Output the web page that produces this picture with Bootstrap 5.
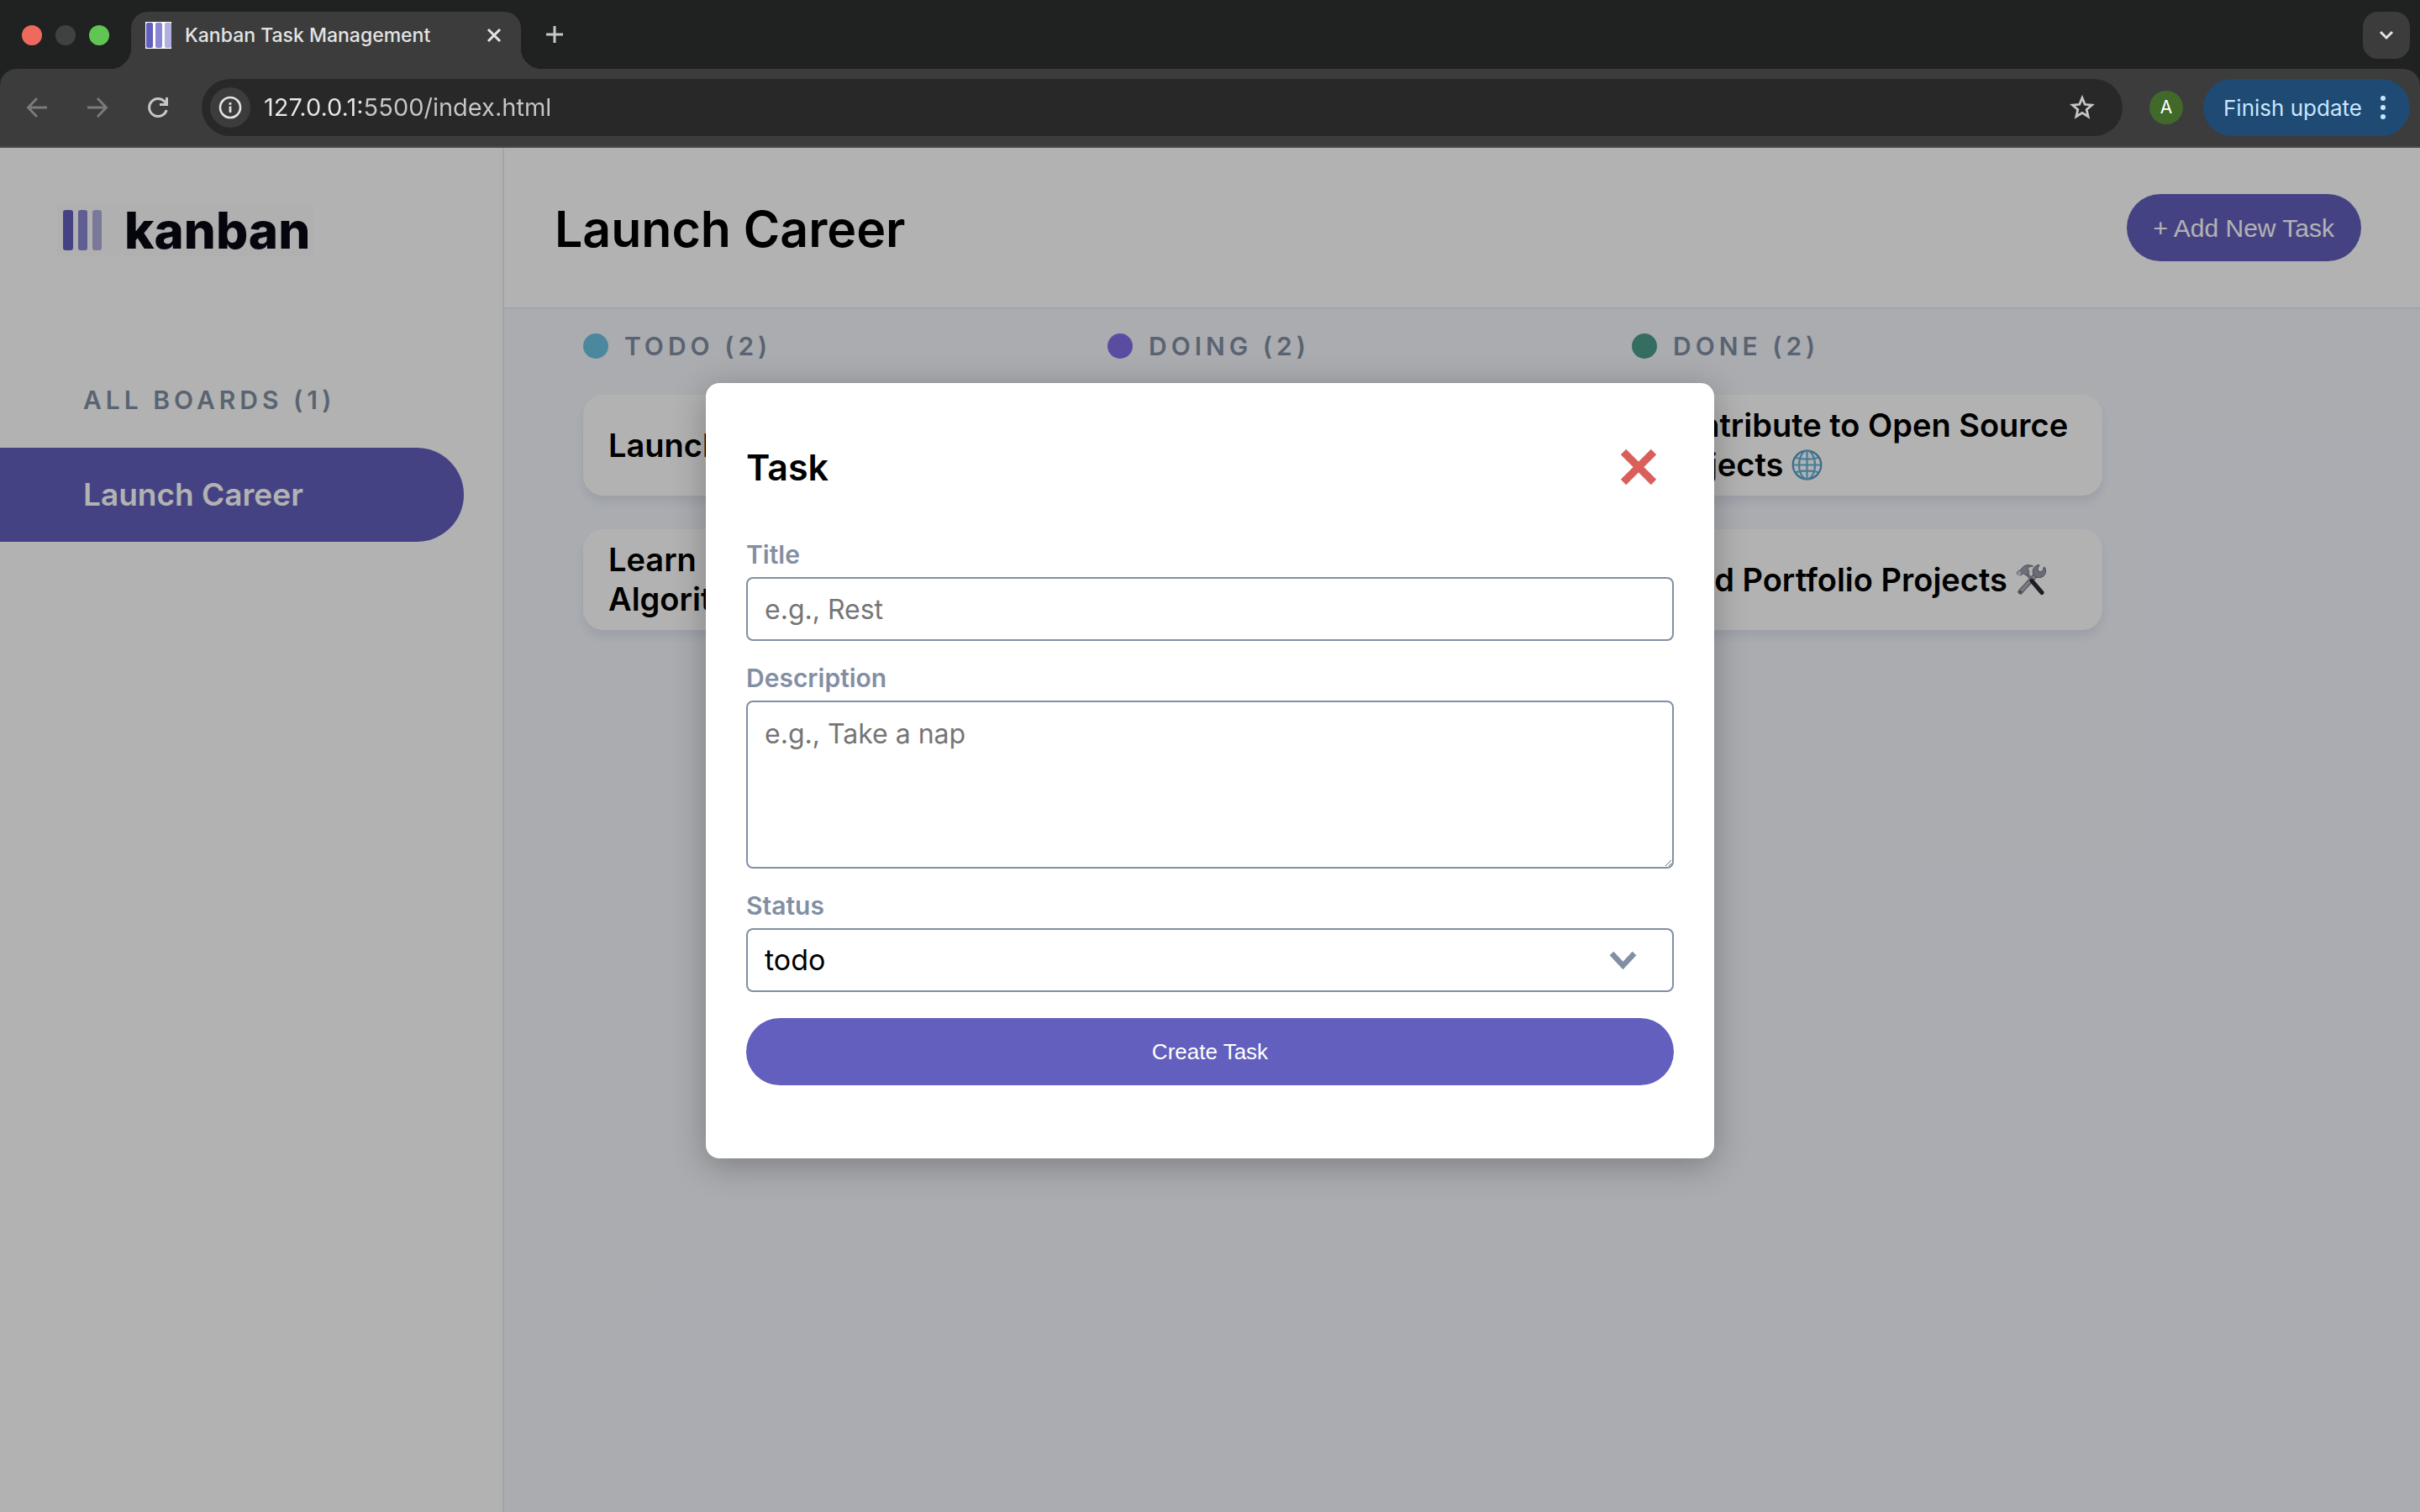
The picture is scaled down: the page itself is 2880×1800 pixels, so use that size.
<!DOCTYPE html>
<html lang="en">
<head>
<meta charset="utf-8">
<meta name="viewport" content="width=device-width, initial-scale=1">
<title>Kanban Task Management</title>
<link href="https://cdn.jsdelivr.net/npm/bootstrap@5.3.0/dist/css/bootstrap.min.css" rel="stylesheet">
<style>
  :root {
    --purple: #635fbe;
    --slate: #828fa3;
    --line: #e4ebfa;
    --chrome: #3c3c3c;
  }
  body { font-family: Inter, "Noto Sans", sans-serif; color: #000; background: #202221; }
  svg { display: block; flex: none; }
  button, input, textarea, select { font-family: inherit; }

  /* Browser window */
  .tab-strip { padding: 14px 12px 0 26px; background: #202221; }
  .light { width: 24px; height: 24px; border-radius: 50%; }
  .light-close { background: #ee6a5f; }
  .light-min { background: #404241; }
  .light-max { background: #61c554; }
  .win-tab {
    position: relative; width: 464px; height: 68px; margin-left: 26px; padding: 0 20px 12px 17px;
    background: var(--chrome); border-radius: 20px 20px 0 0; color: #e3e3e3;
    font-size: 23px; font-weight: 500; line-height: 32px;
  }
  .win-tab::before, .win-tab::after { content: ""; position: absolute; bottom: 0; width: 24px; height: 24px; }
  .win-tab::before { right: 100%; background: radial-gradient(circle at 0 0, transparent 24px, var(--chrome) 24px); }
  .win-tab::after { left: 100%; background: radial-gradient(circle at 100% 0, transparent 24px, var(--chrome) 24px); }
  .bare { padding: 0; border: 0; background: none; color: inherit; }
  .new-tab { margin: 16px 0 0 29px; }
  .tab-menu { width: 56px; height: 56px; border: 0; border-radius: 18px; background: var(--chrome); }
  .toolbar { padding: 12px 12px 12px 28px; background: var(--chrome); border-bottom: 2px solid #4a4a4a; border-radius: 20px 20px 0 0; color: #c7c7c7; }
  .nav-icons { gap: 40px; margin-right: 36px; }
  .dim { color: #7b7b7b; }
  .address { height: 68px; padding: 0 32px 0 10px; border-radius: 34px; background: #282828; }
  .site-info { width: 48px; height: 48px; border-radius: 50%; background: var(--chrome); color: #e3e3e3; }
  .address input {
    border: 0; outline: 0; padding: 0; margin-left: 16px; font-size: 29px; line-height: 40px; color: transparent;
    background: linear-gradient(90deg, #e8e8e8 120px, #c7c7c7 120px); -webkit-background-clip: text; background-clip: text;
  }
  .avatar { width: 40px; height: 40px; margin: 0 24px 0 32px; border: 0; border-radius: 50%; background: #41692a; color: #fff; font-size: 21px; line-height: 40px; padding: 0; }
  .update { width: 246px; height: 68px; padding: 0 26px 0 24px; border: 0; border-radius: 34px; background: #1f4a73; color: #c8e5ff; font-size: 26px; }

  /* Page */
  .sidebar { width: 600px; padding: 66px 46px 48px 0; background: #fff; border-right: 2px solid var(--line); }
  .brand { gap: 26px; margin-left: 68px; padding: 8px 4px 8px 7px; background: #fdfdfd; color: #080814; font-size: 60px; font-weight: 800; line-height: 48px; }
  .tracked { color: var(--slate); font-size: 30px; font-weight: 600; letter-spacing: 5px; line-height: 40px; }
  .boards-title { margin: 150px 0 37px; padding-left: 99px; }
  .board-link { padding: 36px 99px; border-radius: 0 56px 56px 0; background: var(--purple); color: #fff; font-size: 37px; font-weight: 600; line-height: 40px; }
  .board-link:hover { color: #fff; }
  .topbar { height: 192px; padding: 0 70px 0 60px; background: #fff; border-bottom: 2px solid var(--line); }
  .topbar h1 { padding-top: 4px; font-size: 59px; font-weight: 600; line-height: 64px; }
  .pill { height: 80px; border: 0; border-radius: 40px; background: var(--purple); color: #fff; font-family: "Liberation Sans", Arial, sans-serif; }
  .add-btn { padding: 0 32px; font-size: 30px; }
  .board { gap: 64px; padding: 24px 94px; background: #f4f7fd; }
  .lane { width: 560px; }
  .lane-head { gap: 19px; margin-bottom: 38px; }
  .dot { width: 30px; height: 30px; border-radius: 50%; }
  .dot-todo { background: #6cc3e2; }
  .dot-doing { background: #816fe7; }
  .dot-done { background: #4d9c8e; }
  .lane-cards { gap: 40px; }
  .task { min-height: 120px; padding: 0 30px; border-radius: 24px; background: #fff; box-shadow: 0 8px 12px rgba(54, 78, 126, .1); font-size: 38px; font-weight: 600; line-height: 47px; }
  .emoji { display: inline-block; vertical-align: -5px; }

  /* Dialog */
  .backdrop { position: absolute; inset: 0; padding-top: 280px; background: rgba(0, 0, 0, .3); }
  .dialog { width: 1200px; padding: 48px 48px 87px; border-radius: 16px; background: #fff; box-shadow: 0 8px 40px rgba(0, 0, 0, .28); }
  .dialog-head { height: 104px; margin-bottom: 32px; padding-right: 20px; }
  .dialog-head h2 { font-size: 43px; font-weight: 600; line-height: 48px; }
  .fields { gap: 24px; }
  .fields label { margin-bottom: 7px; color: var(--slate); font-size: 30px; font-weight: 600; line-height: 40px; }
  .field { height: 76px; padding: 16px 20px; border: 2px solid var(--slate); border-radius: 8px; background-color: #fff; color: #000; font-size: 32px; line-height: 40px; }
  .field::placeholder { color: #757575; }
  textarea.field { height: 200px; padding-top: 18px; }
  select.field {
    font-size: 34px;
    background-image: url("data:image/svg+xml,%3Csvg xmlns='http://www.w3.org/2000/svg' viewBox='0 0 32 22'%3E%3Cpath d='M2.5 3 16 17.500 29.500 3' fill='none' stroke='%23828fa3' stroke-width='6.500'/%3E%3C/svg%3E");
    background-position: right 42px center; background-size: 33px 22px;
  }
  .create-btn { margin-top: 7px; font-size: 26px; }
</style>
</head>
<body class="d-flex flex-column min-vh-100">

<header>
  <div class="tab-strip d-flex align-items-start">
    <div class="d-flex gap-3 mt-3">
      <span class="light light-close"></span><span class="light light-min"></span><span class="light light-max"></span>
    </div>
    <div class="win-tab d-flex align-items-center">
      <svg width="31" height="32" viewBox="0 0 31 32"><path fill="#fff" d="M0 0h31v32H0z"/><rect x="1" y="1" width="8" height="30" rx="2" fill="#635fbe"/><rect x="12" y="1" width="8" height="30" rx="2" fill="#8a86d2"/><rect x="23" y="1" width="8" height="30" rx="2" fill="#b1aee0"/></svg>
      <span class="ms-3">Kanban Task Management</span>
      <button class="bare ms-auto" aria-label="Close tab"><svg width="24" height="24" viewBox="0 0 24 24"><path d="m5 5 14 14M19 5 5 19" stroke="currentColor" stroke-width="3"/></svg></button>
    </div>
    <button class="bare new-tab" aria-label="New tab"><svg width="22" height="22" viewBox="0 0 22 22"><path d="M11 1v20M1 11h20" stroke="#c7c7c7" stroke-width="3"/></svg></button>
    <button class="tab-menu ms-auto d-flex align-items-center justify-content-center" aria-label="Search tabs"><svg width="18" height="12" viewBox="0 0 18 12"><path d="m2 2 7 7 7-7" fill="none" stroke="#e3e3e3" stroke-width="3"/></svg></button>
  </div>
  <div class="toolbar d-flex align-items-center">
    <nav class="nav-icons d-flex">
      <button class="bare dim" aria-label="Back"><svg width="32" height="32" viewBox="0 0 32 32"><path d="M28 16H6M16 5 5.500 16 16 27" fill="none" stroke="currentColor" stroke-width="2.800"/></svg></button>
      <button class="bare dim" aria-label="Forward"><svg width="32" height="32" viewBox="0 0 32 32"><path d="M4 16h22M16 5l10.500 11L16 27" fill="none" stroke="currentColor" stroke-width="2.800"/></svg></button>
      <button class="bare" aria-label="Reload"><svg width="32" height="32" viewBox="0 0 32 32"><path d="M26.200 19A10.500 10.500 0 1 1 24 9l2.500 2.800" fill="none" stroke="currentColor" stroke-width="3"/><path d="M28 4v10H18v-3h7V4z" fill="currentColor"/></svg></button>
    </nav>
    <div class="address d-flex align-items-center flex-grow-1">
      <button class="bare site-info d-flex align-items-center justify-content-center" aria-label="Site information"><svg width="28" height="28" viewBox="0 0 28 28"><circle cx="14" cy="14" r="12" fill="none" stroke="currentColor" stroke-width="2.600"/><path d="M12.600 12.500h2.800V20h-2.800zM12.600 8h2.800v2.800h-2.800z" fill="currentColor"/></svg></button>
      <input class="flex-grow-1" type="text" aria-label="Address" value="127.0.0.1:5500/index.html">
      <button class="bare" aria-label="Bookmark"><svg width="32" height="32" viewBox="0 0 32 32"><path d="m16 4.500 3.200 7.800 8.300.7-6.300 5.500 1.900 8.200L16 22.300l-7.100 4.400 1.900-8.200L4.500 13l8.300-.7z" fill="none" stroke="currentColor" stroke-width="2.800"/></svg></button>
    </div>
    <button class="avatar" aria-label="Profile">A</button>
    <button class="update d-flex align-items-center justify-content-between">Finish update<svg width="12" height="28" viewBox="0 0 12 28"><g fill="currentColor"><circle cx="6" cy="3" r="3"/><circle cx="6" cy="14" r="3"/><circle cx="6" cy="25" r="3"/></g></svg></button>
  </div>
</header>

<div class="position-relative d-flex flex-grow-1">
  <aside class="sidebar flex-shrink-0">
    <div class="brand d-inline-flex align-items-center">
      <svg width="47" height="48" viewBox="0 0 47 48"><rect width="12" height="48" rx="3" fill="#635fbe"/><rect x="18" width="11" height="48" rx="3" fill="#8986d0"/><rect x="35" width="11" height="48" rx="3" fill="#b1aedc"/></svg>
      <span>kanban</span>
    </div>
    <h2 class="tracked boards-title">ALL BOARDS (1)</h2>
    <nav><a href="#" class="board-link d-block text-decoration-none">Launch Career</a></nav>
  </aside>

  <main class="d-flex flex-column flex-grow-1">
    <div class="topbar d-flex align-items-center justify-content-between">
      <h1 class="m-0">Launch Career</h1>
      <button class="pill add-btn">+ Add New Task</button>
    </div>
    <div class="board d-flex flex-grow-1">
      <section class="lane">
        <div class="lane-head d-flex align-items-center"><span class="dot dot-todo"></span><h2 class="tracked m-0">TODO (2)</h2></div>
        <div class="lane-cards d-flex flex-column">
          <article class="task d-flex align-items-center"><div>Launch Career</div></article>
          <article class="task d-flex align-items-center"><div>Learn Data Structures &amp;<br>Algorithms</div></article>
        </div>
      </section>
      <section class="lane">
        <div class="lane-head d-flex align-items-center"><span class="dot dot-doing"></span><h2 class="tracked m-0">DOING (2)</h2></div>
      </section>
      <section class="lane">
        <div class="lane-head d-flex align-items-center"><span class="dot dot-done"></span><h2 class="tracked m-0">DONE (2)</h2></div>
        <div class="lane-cards d-flex flex-column">
          <article class="task d-flex align-items-center"><div>Contribute to Open Source Projects
            <svg class="emoji" width="37" height="37" viewBox="0 0 37 37" fill="none" stroke="#64b4da" stroke-width="2.200"><circle cx="18.500" cy="18.500" r="16.800" stroke="#5298be"/><path d="M18.500 1.700v33.600M1.700 18.500h33.600M4.500 9.700q14 4 28 0M4.500 27.300q14-4 28 0"/><ellipse cx="18.500" cy="18.500" rx="9.500" ry="16.800"/></svg></div></article>
          <article class="task d-flex align-items-center"><div>Build Portfolio Projects
            <svg class="emoji" width="36" height="38" viewBox="0 0 36 38"><path d="M25 12 5.500 33.500" stroke="#77727f" stroke-width="6" stroke-linecap="round"/><path d="M25 12 5.500 33.500" stroke="#aeb2be" stroke-width="3.500" stroke-linecap="round"/><circle cx="5.500" cy="33.500" r="1.300" fill="#4a4852"/><path d="M28 1.500a8 8 0 0 0-7 11.500 7 7 0 0 0 13.500-8.500l-1.200-.3-1.500 5-4 .8-2-3.500z" fill="#989cab" stroke="#6d6b78"/><path d="m12.500 11.500 7 8" stroke="#8b8f9c" stroke-width="3.500"/><path d="m19 20.500 12 14" stroke="#2c2a32" stroke-width="5" stroke-linecap="round"/><path d="M1.500 11.500c0-2.500 2-3.500 4-3.500C9 1.500 14 .5 20.500 3c-4 0-6 1.500-6 3.500l1.500 4-4 3.500-3-2.500-2.500 2c-2 1-5 0-5-2z" fill="#9da1ae" stroke="#6d6b78"/><ellipse cx="4" cy="11.500" rx="2" ry="2.800" fill="#d3d7df"/></svg></div></article>
        </div>
      </section>
    </div>
  </main>

  <div class="backdrop d-flex justify-content-center align-items-start">
    <div class="dialog" role="dialog" aria-modal="true" aria-labelledby="dialogTitle">
      <div class="dialog-head d-flex align-items-center justify-content-between">
        <h2 class="m-0" id="dialogTitle">Task</h2>
        <button class="bare" aria-label="Close"><svg width="44" height="44" viewBox="0 0 44 44"><path d="m4 4 36 36M40 4 4 40" stroke="#da5f5b" stroke-width="9"/></svg></button>
      </div>
      <form class="fields d-flex flex-column">
        <div class="d-flex flex-column">
          <label for="title">Title</label>
          <input class="field" id="title" type="text" placeholder="e.g., Rest">
        </div>
        <div class="d-flex flex-column">
          <label for="description">Description</label>
          <textarea class="field" id="description" placeholder="e.g., Take a nap"></textarea>
        </div>
        <div class="d-flex flex-column">
          <label for="status">Status</label>
          <select class="field form-select" id="status"><option>todo</option><option>doing</option><option>done</option></select>
        </div>
        <button class="pill create-btn" type="button">Create Task</button>
      </form>
    </div>
  </div>
</div>

<script src="https://cdn.jsdelivr.net/npm/bootstrap@5.3.0/dist/js/bootstrap.bundle.min.js"></script>
</body>
</html>
